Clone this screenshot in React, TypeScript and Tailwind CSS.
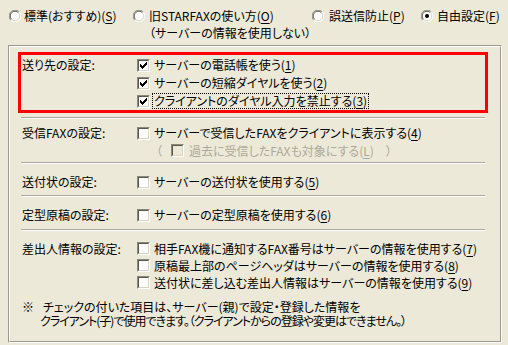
import React from "react";

function Radio({ checked }: { checked?: boolean }) {
  return (
    <svg width="12" height="12" viewBox="0 0 12 12" className="shrink-0">
      <circle cx="6" cy="6" r="5.5" fill="#fff" />
      <path d="M1.8 10.2 A5.5 5.5 0 0 1 10.2 1.8" fill="none" stroke="#8c897b" strokeWidth="1" />
      <path d="M2.6 9.4 A4.5 4.5 0 0 1 9.4 2.6" fill="none" stroke="#5a584f" strokeWidth="1" />
      <path d="M10.2 1.8 A5.5 5.5 0 0 1 1.8 10.2" fill="none" stroke="#ffffff" strokeWidth="1" />
      <path d="M9.4 2.6 A4.5 4.5 0 0 1 2.6 9.4" fill="none" stroke="#d8d4c4" strokeWidth="1" />
      {checked && <circle cx="6" cy="6" r="2" fill="#000" />}
    </svg>
  );
}

function Check({ checked, disabled }: { checked?: boolean; disabled?: boolean }) {
  return (
    <span className="inline-flex shrink-0 w-[13px] h-[13px] border border-t-[#8c897b] border-l-[#8c897b] border-r-white border-b-white">
      <span
        className={
          "flex-1 border border-t-[#5a584f] border-l-[#5a584f] border-r-[#d8d4c4] border-b-[#d8d4c4] " +
          (disabled ? "bg-[#ECE9D8]" : "bg-white")
        }
      >
        {checked && (
          <svg width="9" height="9" viewBox="0 0 9 9" shapeRendering="crispEdges">
            <path
              fill="#000"
              d="M7 1h1v1h-1zM6 2h2v1h-2zM1 3h1v1h-1zM5 3h3v1h-3zM1 4h2v1h-2zM4 4h3v1h-3zM1 5h5v1h-5zM2 6h3v1h-3zM3 7h1v1h-1z"
            />
          </svg>
        )}
      </span>
    </span>
  );
}

function U({ c }: { c: string }) {
  return (
    <>
      (<span className="underline underline-offset-2">{c}</span>)
    </>
  );
}

function Row({
  label,
  checked,
  focus,
  children,
  h = "h-[18px]",
}: {
  label?: string;
  checked?: boolean;
  focus?: boolean;
  children: React.ReactNode;
  h?: string;
}) {
  return (
    <div className={"flex items-center " + h}>
      <div className="w-[115px] shrink-0">{label}</div>
      <Check checked={checked} />
      <span
        className={
          "whitespace-nowrap " +
          (focus ? "ml-[3px] px-[1px] outline outline-1 outline-dotted outline-black" : "ml-[4px]")
        }
      >
        {children}
      </span>
    </div>
  );
}

function Sep() {
  return <div className="mx-[3px] border-t border-t-[#aca899] border-b border-b-white" />;
}

export default function App() {
  return (
    <div className="w-[508px] h-[345px] bg-[#ECE9D8] text-black text-[12px] leading-[14px] font-['Noto_Sans_CJK_JP',sans-serif] [font-feature-settings:'palt'] overflow-hidden">
      <div className="flex pl-[9px] pt-[9px] h-[45px] whitespace-nowrap">
        <div className="w-[124px] flex items-start gap-[3px]">
          <span className="pt-[1px]"><Radio /></span>
          <span>
            標準(おすすめ)<U c="S" />
          </span>
        </div>
        <div className="w-[179px] flex items-start gap-[4px]">
          <span className="pt-[1px]"><Radio /></span>
          <div className="flex flex-col gap-[3px]">
            <span>
              旧STARFAXの使い方<U c="O" />
            </span>
            <span>（サーバーの情報を使用しない）</span>
          </div>
        </div>
        <div className="w-[109px] flex items-start gap-[5px]">
          <span className="pt-[1px]"><Radio /></span>
          <span>
            誤送信防止<U c="P" />
          </span>
        </div>
        <div className="flex items-start gap-[4px]">
          <span className="pt-[1px]"><Radio checked /></span>
          <span>
            自由設定<U c="F" />
          </span>
        </div>
      </div>

      <div className="ml-[8px] w-[494px] h-[298px] border border-t-[#9d9a8c] border-l-[#9d9a8c] border-r-white border-b-white">
        <div className="h-full border border-t-white border-l-white border-r-[#9d9a8c] border-b-[#9d9a8c] pl-[8px] pr-[12px] pt-[5px]">
          <div className="border-[3px] border-[#ff0000] pl-[1px] pt-[1px]">
            <Row label="送り先の設定:" checked>
              サーバーの電話帳を使う<U c="1" />
            </Row>
            <Row checked>
              サーバーの短縮ダイヤルを使う<U c="2" />
            </Row>
            <Row checked focus>
              クライアントのダイヤル入力を禁止する<U c="3" />
            </Row>
          </div>

          <div className="mt-[4px]">
            <Sep />
          </div>

          <div className="pl-[4px] pt-[5px] pb-[2px]">
            <Row label="受信FAXの設定:">
              サーバーで受信したFAXをクライアントに表示する<U c="4" />
            </Row>
            <div className="flex items-center h-[18px] pl-[115px] text-[#aca899] whitespace-nowrap">
              <span className="ml-[19px]">（</span>
              <span className="ml-[9px]">
                <Check disabled />
              </span>
              <span className="ml-[5px]">
                過去に受信したFAXも対象にする<U c="L" />
              </span>
              <span className="ml-[12px]">）</span>
            </div>
          </div>
          <Sep />

          <div className="pl-[4px] pt-[9px] pb-[4px]">
            <Row label="送付状の設定:">
              サーバーの送付状を使用する<U c="5" />
            </Row>
          </div>
          <Sep />

          <div className="pl-[4px] pt-[9px] pb-[5px]">
            <Row label="定型原稿の設定:">
              サーバーの定型原稿を使用する<U c="6" />
            </Row>
          </div>
          <Sep />

          <div className="pl-[4px] pt-[9px]">
            <Row label="差出人情報の設定:" h="h-[17px]">
              相手FAX機に通知するFAX番号はサーバーの情報を使用する<U c="7" />
            </Row>
            <Row h="h-[17px]">
              原稿最上部のページヘッダはサーバーの情報を使用する<U c="8" />
            </Row>
            <Row h="h-[17px]">
              送付状に差し込む差出人情報はサーバーの情報を使用する<U c="9" />
            </Row>
          </div>

          <div className="pl-[4px] mt-[9px] leading-[14px] whitespace-nowrap">
            <div className="flex">
              <span className="w-[21px]">※</span>
              <span>チェックの付いた項目は、サーバー(親)で設定・登録した情報を</span>
            </div>
            <div className="pl-[18px] tracking-[-1px]">
              クライアント(子)で使用できます。（クライアントからの登録や変更はできません。）
            </div>
          </div>
        </div>
      </div>
    </div>
  );
}
